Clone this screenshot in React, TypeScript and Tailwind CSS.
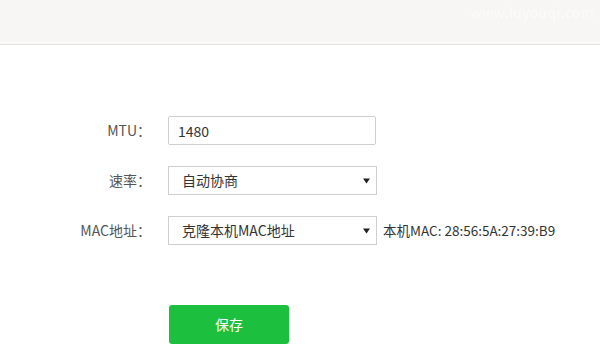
import { ChangeEvent, useState } from 'react';

const font = { fontFamily: '"Noto Sans CJK SC", "Noto Sans", sans-serif' };

const Arrow = () => (
  <svg width="7" height="6" viewBox="0 0 7 6" className="shrink-0">
    <path d="M0 0.5 H7 L3.5 5.5 Z" fill="#222" />
  </svg>
);

const Row = ({ label, children }: { label: string; children: React.ReactNode }) => (
  <div className="flex h-[29px] items-center">
    <div className="w-[152px] pr-[1px] text-right text-[14px] text-[#555]">{label}</div>
    <div className="ml-[16px] flex items-center">{children}</div>
  </div>
);

const FakeSelect = ({ value }: { value: string }) => (
  <div className="flex h-[29px] w-[209px] items-center justify-between border border-[#cfcfcf] bg-white pl-[13px] pr-[6px] text-[14px] text-[#333]">
    <span>{value}</span>
    <Arrow />
  </div>
);

export default function App() {
  const [mtu, setMtu] = useState('1480');

  return (
    <div className="h-[360px] w-[600px] overflow-hidden bg-white" style={font}>
      {/* Top bar */}
      <div className="relative h-[41px] bg-[#f7f6f4]">
        <span className="absolute right-[6px] top-[2px] text-[14px] tracking-wide text-white/60">www.luyouqi.com</span>
      </div>
      <div className="h-[3px] bg-[#faf9f7]" />
      <div className="h-[1px] bg-[#e4e2de]" />

      {/* Form */}
      <div className="flex flex-col gap-[21px] pt-[71px]">
        <Row label="MTU：">
          <input
            value={mtu}
            onChange={(e: ChangeEvent<HTMLInputElement>) => setMtu(e.target.value)}
            className="h-[29px] w-[208px] rounded-[2px] border border-[#cfcfcf] px-[9px] text-[14px] text-[#333] outline-none"
          />
        </Row>
        <Row label="速率：">
          <FakeSelect value="自动协商" />
        </Row>
        <Row label="MAC地址：">
          <FakeSelect value="克隆本机MAC地址" />
          <span className="ml-[6px] text-[13.5px] text-[#333]">本机MAC: 28:56:5A:27:39:B9</span>
        </Row>
      </div>

      <div className="mt-[60px] pl-[169px]">
        <button className="h-[39px] w-[120px] rounded-[3px] bg-[#1dbf3e] text-[14px] text-white">保存</button>
      </div>
    </div>
  );
}
